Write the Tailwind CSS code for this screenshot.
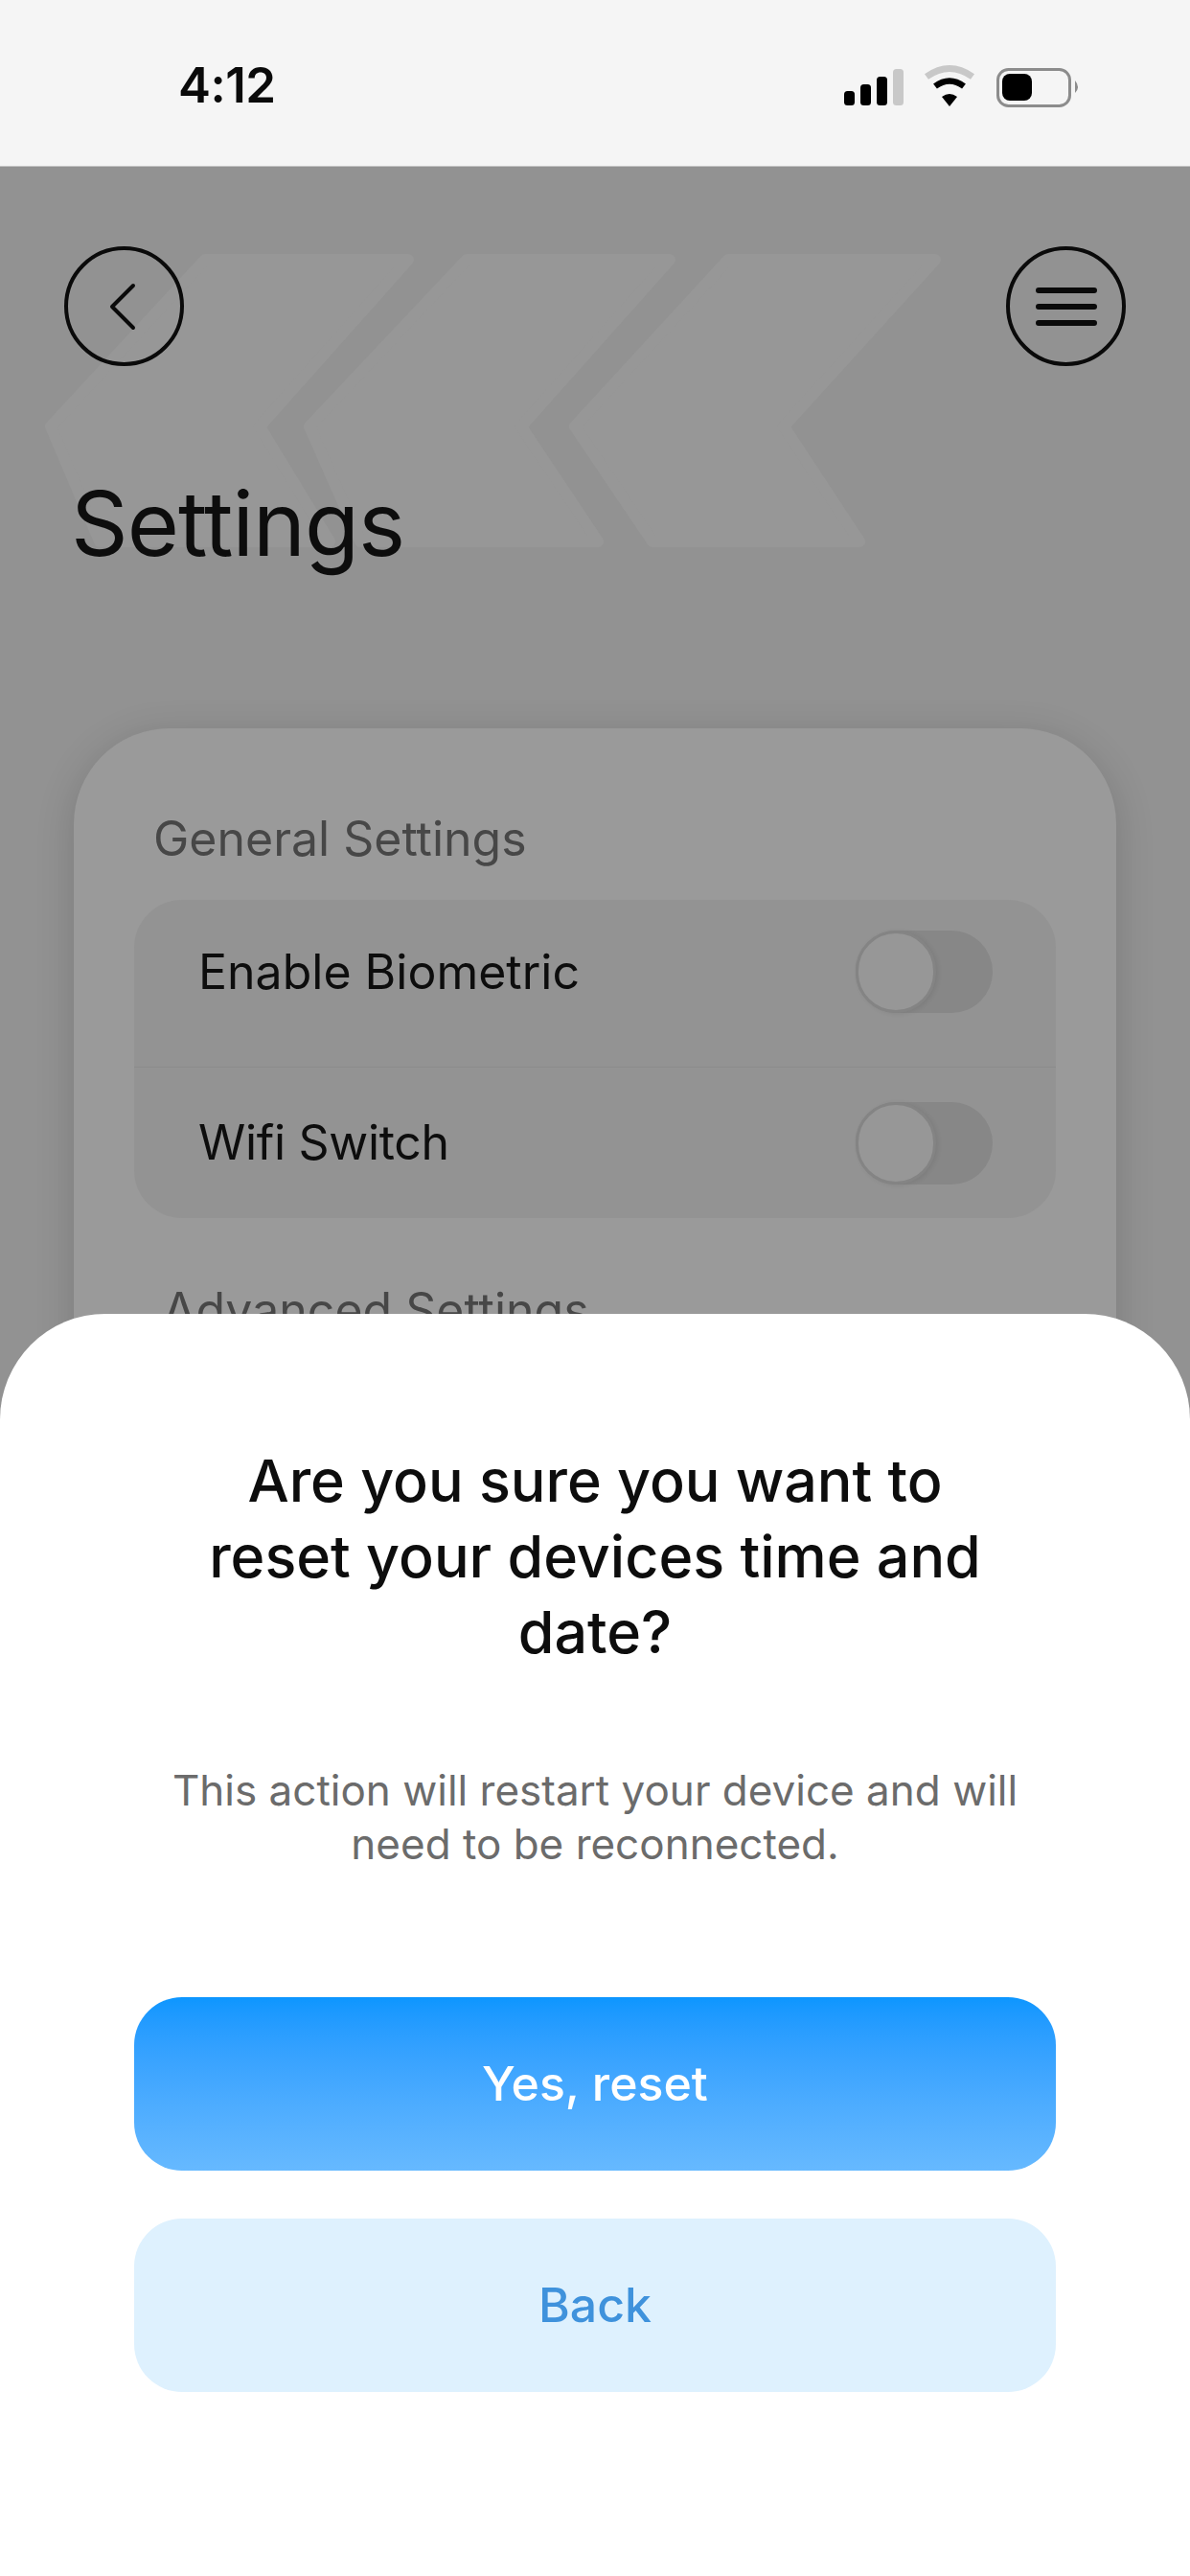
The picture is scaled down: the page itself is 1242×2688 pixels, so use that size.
<!DOCTYPE html>
<html lang="en">
<head>
    <meta charset="UTF-8">
    <meta name="viewport" content="width=device-width, initial-scale=1.0">
    <title>Settings</title>
    <script src="https://cdn.jsdelivr.net/npm/@tailwindcss/browser@4"></script>
</head>

<body class="font-['Inter',sans-serif]">
    <div class="relative w-[1242px] h-[2688px] overflow-hidden bg-[#929292]">

        <!-- status bar -->
        <div class="relative flex items-center justify-between h-[174px] bg-[#f5f5f5] border-b border-[#c4c4c4]">
            <span class="ml-[186px] mt-[4px] text-[51px] leading-none font-semibold text-[#0a0a0a] tracking-[-0.5px]">4:12</span>
            <svg class="absolute left-[870px] top-[60px]" width="270" height="60" viewBox="870 60 270 60">
                <rect x="881" y="95" width="11" height="15" rx="3.5" fill="#000"/>
                <rect x="898" y="88" width="11" height="22" rx="3.5" fill="#000"/>
                <rect x="915" y="80" width="11" height="30" rx="3.5" fill="#000"/>
                <rect x="932" y="72" width="11" height="38" rx="3.5" fill="#c8c8c8"/>
                <path d="M967 80 Q991 63 1015 80" fill="none" stroke="#c8c8c8" stroke-width="7"/>
                <path d="M976 90 Q991 79 1006 90" fill="none" stroke="#000" stroke-width="6.5"/>
                <path d="M983 101 L991 111 L999 101 Q991 95 983 101Z" fill="#000"/>
                <rect x="1041.5" y="72.5" width="75" height="38" rx="11" fill="none" stroke="#8c8c8c" stroke-width="3"/>
                <rect x="1046" y="77" width="31" height="28" rx="8" fill="#000"/>
                <path d="M1122 84 Q1128 91 1122 97Z" fill="#8c8c8c"/>
            </svg>
        </div>

        <!-- background chevrons -->
        <svg class="absolute left-0 top-[174px]" width="1242" height="460" viewBox="0 174 1242 460">
            <g fill="#979797" stroke="#979797" stroke-width="12" stroke-linejoin="round">
                <path d="M214 271 H426 L271 445 L344 565 H104 L53 445Z"/>
                <path d="M487 271 H699 L544 445 L624 565 H376 L323 445Z"/>
                <path d="M760 271 H976 L818 445 L897 565 H681 L600 445Z"/>
            </g>
        </svg>

        <div class="relative">
            <!-- header -->
            <div class="flex justify-between px-[67px] pt-[83px]">
                <button class="flex items-center justify-center w-[125px] h-[125px] rounded-full border-4 border-[#0a0a0a]">
                    <svg width="40" height="50" viewBox="0 0 40 50" fill="none" stroke="#0a0a0a" stroke-width="4" stroke-linecap="round" stroke-linejoin="round">
                        <path d="M29 3 L7 25 L29 47"/>
                    </svg>
                </button>
                <button class="flex items-center justify-center w-[125px] h-[125px] rounded-full border-4 border-[#0a0a0a]">
                    <svg width="64" height="44" viewBox="0 0 64 44" fill="none" stroke="#0a0a0a" stroke-width="6" stroke-linecap="round">
                        <path d="M3 5 H61 M3 22 H61 M3 39 H61"/>
                    </svg>
                </button>
            </div>

            <h1 class="ml-[74px] mt-[109px] text-[93px] leading-[110px] font-normal text-[#0d0d0d] tracking-[-1px]">Settings</h1>

            <!-- settings card -->
            <div class="ml-[77px] mt-[159px] w-[1088px] h-[900px] rounded-[100px] bg-[#9a9a9a] shadow-[0_8px_40px_rgba(0,0,0,0.16)] px-[63px] pt-[85px]">
                <p class="ml-[20px] text-[50px] leading-[60px] text-[#474747]">General Settings</p>
                <div class="mt-[34px] rounded-[50px] bg-[#939393]">
                    <div class="flex items-center justify-between h-[175px] pl-[67px] pr-[66px] pb-[24px] border-b border-[#8b8b8b]">
                        <span class="text-[50px] text-[#0d0d0d]">Enable Biometric</span>
                        <div class="relative w-[143px] h-[86px] rounded-full bg-[#878787]">
                            <div class="absolute left-0 top-0 w-[84px] h-[86px] rounded-full bg-[#979797] border-[3px] border-[#848484] shadow-[2px_1px_5px_rgba(0,0,0,0.08)]"></div>
                        </div>
                    </div>
                    <div class="flex items-center justify-between h-[157px] pl-[67px] pr-[66px]">
                        <span class="text-[50px] tracking-[-0.3px] text-[#0d0d0d]">Wifi Switch</span>
                        <div class="relative w-[143px] h-[86px] rounded-full bg-[#878787]">
                            <div class="absolute left-0 top-0 w-[84px] h-[86px] rounded-full bg-[#979797] border-[3px] border-[#848484] shadow-[2px_1px_5px_rgba(0,0,0,0.08)]"></div>
                        </div>
                    </div>
                </div>
                <p class="ml-[30px] mt-[66px] text-[50px] leading-[60px] text-[#474747]">Advanced Settings</p>
            </div>
        </div>

        <!-- bottom sheet -->
        <div class="absolute left-0 right-0 bottom-0 h-[1317px] rounded-t-[110px] bg-white px-[140px] pt-[135px] text-center">
            <h2 class="-mx-[20px] text-[61px] leading-[79px] font-medium text-[#0d0d0d]">Are you sure you want to<br>reset your devices time and<br>date?</h2>
            <p class="mt-[97px] -mx-[20px] text-[44px] leading-[56px] text-[#6b6b6b]">This action will restart your device and will<br>need to be reconnected.</p>
            <button class="block w-full h-[181px] mt-[132px] rounded-[50px] bg-linear-to-b from-[#0b96ff] to-[#66b9ff] text-[50px] font-medium text-white">Yes, reset</button>
            <button class="block w-full h-[181px] mt-[50px] rounded-[50px] bg-[#def1fe] text-[50px] font-medium text-[#3f92dc]">Back</button>
        </div>
    </div>
</body>
</html>
